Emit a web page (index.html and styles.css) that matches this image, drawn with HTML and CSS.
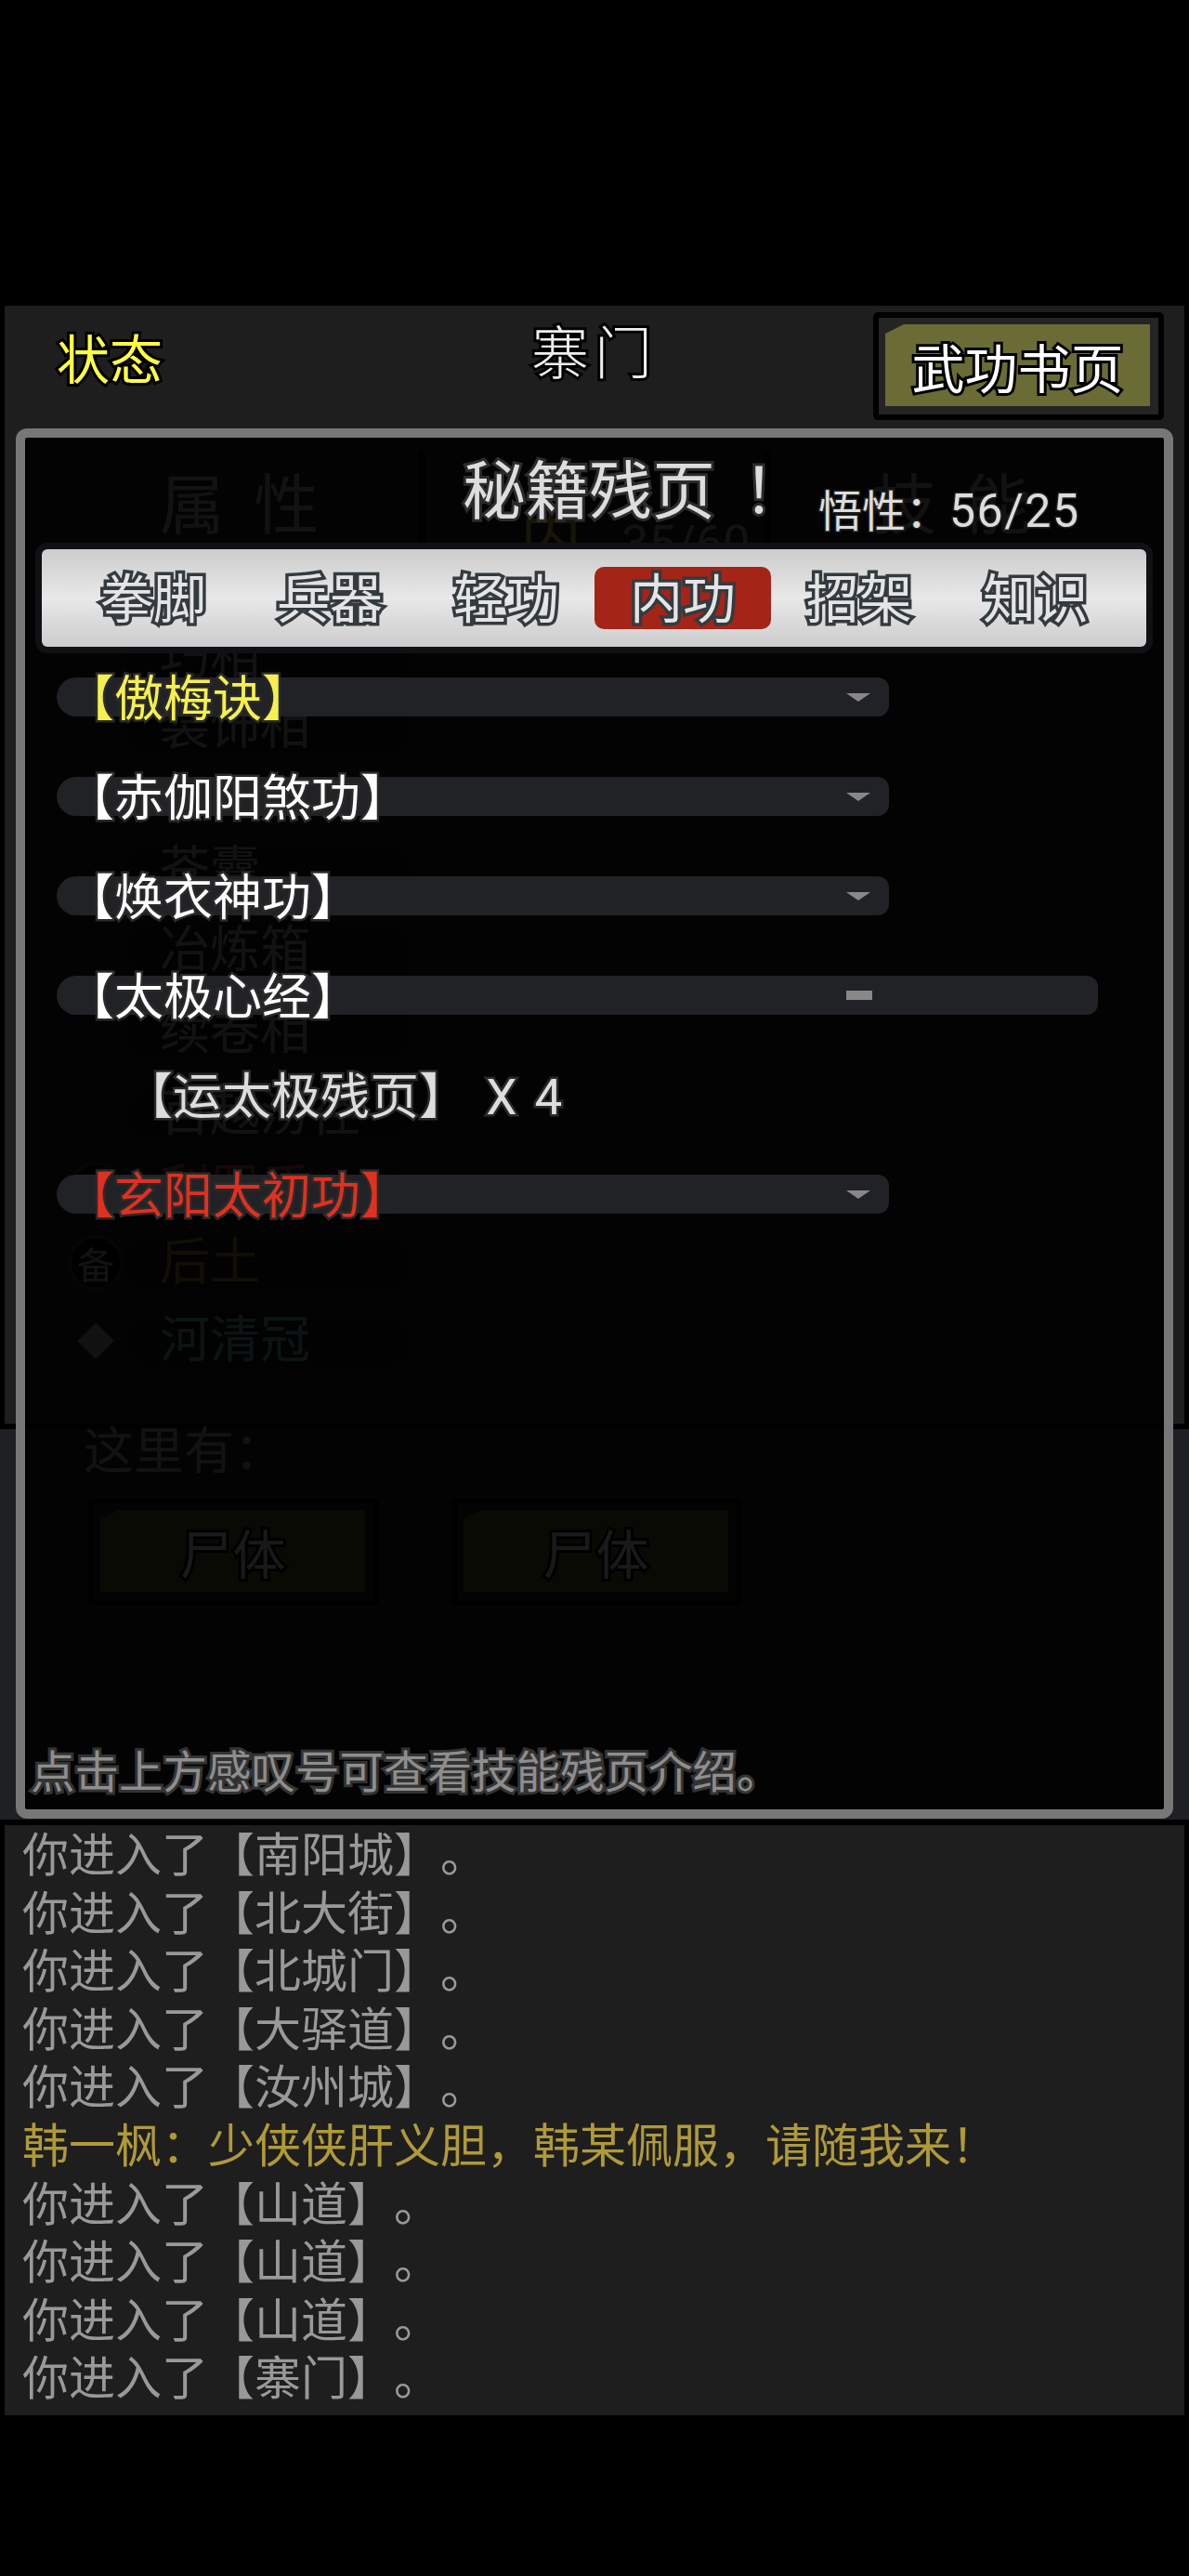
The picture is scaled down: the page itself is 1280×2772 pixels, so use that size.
FILE: index.html
```html
<!DOCTYPE html>
<html lang="zh-CN">
<head>
  <meta charset="UTF-8" />
  <title>秘籍残页</title>
  <link rel="stylesheet" href="styles.css">
</head>
<body>

<div class="scene">
  <div class="topbar">
    <div class="status">状态</div>
    <div class="place">寨门</div>
    <div class="btn top-btn"><span class="btn-face">武功书页</span></div>
  </div>

  <div class="page-tabs">
    <div class="page-tab">属 性</div>
    <div class="page-tab mid"><span class="mid-name">内</span><span class="mid-num">35/60</span></div>
    <div class="page-tab last">技 能</div>
  </div>

  <div class="gear-list">
    <div class="gear tight"><span class="gear-name">巧相</span></div>
    <div class="gear tight"><span class="gear-name">装饰相</span></div>
    <div class="gear tight"></div>
    <div class="gear"><span class="gear-name">苍囊</span></div>
    <div class="gear tall"><span class="gear-name">冶炼箱</span></div>
    <div class="gear tall"><span class="gear-name">续卷相</span></div>
    <div class="gear tall"><span class="gear-name">百越涝径</span></div>
    <div class="gear short"><span class="gear-icon round"></span><span class="gear-name red">利罗盾</span></div>
    <div class="gear"><span class="gear-icon round">备</span><span class="gear-name brown">后土</span></div>
    <div class="gear"><span class="gear-icon"><span class="diamond"></span></span><span class="gear-name teal">河清冠</span></div>
  </div>
</div>

<div class="room">
  <div class="room-title">这里有：</div>
  <div class="room-items">
    <div class="btn"><span class="btn-face">尸体</span></div>
    <div class="btn"><span class="btn-face">尸体</span></div>
  </div>
</div>

<div class="log">
  <div>你进入了【南阳城】。</div>
  <div>你进入了【北大街】。</div>
  <div>你进入了【北城门】。</div>
  <div>你进入了【大驿道】。</div>
  <div>你进入了【汝州城】。</div>
  <div class="talk">韩一枫：少侠侠肝义胆，韩某佩服，请随我来！</div>
  <div>你进入了【山道】。</div>
  <div>你进入了【山道】。</div>
  <div>你进入了【山道】。</div>
  <div>你进入了【寨门】。</div>
</div>

<!-- skill page popup, sits over everything above -->
<div class="modal">
  <div class="modal-head">
    <div class="modal-title">秘籍残页<span class="bang">！</span></div>
    <div class="modal-points">悟性：<span class="points-num">56/25</span></div>
  </div>

  <div class="kinds">
    <div class="kind">拳脚</div>
    <div class="kind">兵器</div>
    <div class="kind">轻功</div>
    <div class="kind active">内功</div>
    <div class="kind">招架</div>
    <div class="kind">知识</div>
  </div>

  <div class="skills">
    <div class="skill">
      <span class="skill-name yellow">【傲梅诀】</span>
      <span class="arrow"></span>
    </div>
    <div class="skill">
      <span class="skill-name">【赤伽阳煞功】</span>
      <span class="arrow"></span>
    </div>
    <div class="skill">
      <span class="skill-name">【焕衣神功】</span>
      <span class="arrow"></span>
    </div>
    <div class="skill wide">
      <span class="skill-name">【太极心经】</span>
      <span class="square"></span>
    </div>
    <div class="piece">【运太极残页】 X 4</div>
    <div class="skill">
      <span class="skill-name red-name">【玄阳太初功】</span>
      <span class="arrow"></span>
    </div>
  </div>

  <div class="hint">点击上方感叹号可查看技能残页介绍。</div>
</div>

</body>
</html>
```

FILE: styles.css
```css
body {
  margin: 0;
  height: 2772px;
  padding-top: 329px;
  box-sizing: border-box;
  background-color: #000;
  color: #bbb;
  font-family: Roboto, "Noto Sans CJK SC", sans-serif;
  text-spacing-trim: space-all;
  position: relative;
  overflow: hidden;
}

.scene {
  height: 1203px;
  margin: 0 5px;
  background-color: #1e1e1e;
}

.topbar {
  display: grid;
  grid-template-columns: 1fr auto 1fr;
  height: 132px;
  padding: 7px 22px 0 56px;
  box-sizing: border-box;
}

.status {
  font-size: 57px;
  line-height: 106px;
  color: #ffff44;
  -webkit-text-stroke: 6px #000;
  paint-order: stroke fill;
}

.place {
  margin-right: 34px;
  font-size: 62px;
  font-weight: 300;
  line-height: 92px;
  letter-spacing: 6px;
  color: #eee;
  -webkit-text-stroke: 6px #000;
  paint-order: stroke fill;
}

.top-btn {
  justify-self: end;
}

.btn {
  width: 313px;
  height: 116px;
  box-sizing: border-box;
  padding: 7px 9px 9px 7px;
  background-color: #242424;
  border: 6px solid #000;
  border-radius: 5px;
}

.btn-face {
  display: flex;
  align-items: center;
  justify-content: center;
  height: 100%;
  background-color: #6b6b35;
  clip-path: polygon(20px 0, 100% 0, 100% 100%, 0 100%, 0 10px);
  font-size: 57px;
  color: #fff;
  -webkit-text-stroke: 6px #000;
  paint-order: stroke fill;
}

.page-tabs {
  display: flex;
  height: 110px;
  margin: 24px 57px 0 60px;
  font-size: 70px;
  line-height: 120px;
  text-align: center;
  word-spacing: 14px;
}

.page-tab {
  width: 385px;
}

.page-tab.mid {
  width: 380px;
  height: 110px;
  padding-left: 102px;
  border-left: 8px solid #000;
  border-right: 8px solid #000;
  box-sizing: border-box;
  text-align: left;
  font-size: 66px;
  line-height: 190px;
}

.mid-name {
  color: #e8d040;
  margin-right: 43px;
}

.mid-num {
  font-size: 52px;
}

.page-tab.last {
  width: 388px;
}

.gear-list {
  margin-top: 76px;
}

.gear {
  display: flex;
  align-items: center;
  height: 84px;
  padding-left: 130px;
  position: relative;
  font-size: 54px;
}

.gear.tight {
  height: 74.7px;
}

.gear.tall {
  height: 88px;
}

.gear.short {
  height: 73.5px;
}

.gear-icon {
  position: absolute;
  left: 68px;
  width: 60px;
  height: 60px;
  display: flex;
  align-items: center;
  justify-content: center;
  font-size: 40px;
}

.gear-icon.round {
  background-color: #000;
  border: 4px solid #334;
  border-radius: 50%;
  box-sizing: border-box;
}

.diamond {
  width: 28px;
  height: 28px;
  background-color: #aaa;
  transform: rotate(45deg);
}

.gear-name {
  width: 271px;
  padding-left: 37px;
  background-color: #161616;
  border-radius: 30px;
  line-height: 60px;
}

.red {
  color: #e05050;
}

.brown {
  color: #c09030;
}

.teal {
  color: #70c8c8;
}

.room {
  height: 420px;
  margin-top: 6px;
  background-color: #1e2024;
}

.room-title {
  padding-left: 90px;
  font-size: 54px;
  line-height: 50px;
}

.room-items {
  display: flex;
  gap: 78px;
  margin: 24px 0 0 95px;
}

.log {
  height: 635px;
  box-sizing: border-box;
  margin: 6px 5px 0;
  padding: 2px 0 0 19px;
  background-color: #1e1e1e;
  color: #999;
  font-size: 50px;
  line-height: 62.6px;
}

.talk {
  color: #b09a38;
}

.modal {
  position: absolute;
  left: 17px;
  top: 461px;
  width: 1246px;
  height: 1496px;
  box-sizing: border-box;
  display: flex;
  flex-direction: column;
  background-color: rgba(0, 0, 0, 0.9);
  border: 10px solid #777;
  border-radius: 12px;
}

.modal-head {
  display: flex;
  align-items: flex-start;
  height: 120px;
  padding-left: 471px;
  box-sizing: border-box;
}

.modal-title {
  width: 380px;
  flex-shrink: 0;
  font-size: 68px;
  line-height: 106px;
  white-space: nowrap;
  color: #ddd;
  -webkit-text-stroke: 6px #2c2c2c;
  paint-order: stroke fill;
}

.bang {
  font-family: "Noto Sans CJK TC", sans-serif;
  margin-left: 30px;
}

.modal-points {
  margin: 44px 0 0 3px;
  font-size: 47px;
  line-height: 70px;
  white-space: nowrap;
  color: #ddd;
  -webkit-text-stroke: 3px #222;
  paint-order: stroke fill;
}

.points-num {
  font-size: 50px;
  letter-spacing: 1.5px;
}

.kinds {
  display: flex;
  align-items: center;
  height: 105px;
  margin: 0 19px 0 18px;
  padding-left: 25px;
  background: linear-gradient(#ccc, #e8e8e8 50%, #ccc);
  border-radius: 6px;
  box-shadow: 0 0 0 7px #101114;
}

.kind {
  width: 190px;
  height: 67px;
  text-align: center;
  font-size: 57px;
  line-height: 72px;
  color: #e4e4e4;
  -webkit-text-stroke: 7px #333b40;
  paint-order: stroke fill;
}

.kind.active {
  background-color: #a52418;
  border-radius: 10px;
}

.skills {
  margin-top: 33px;
  font-size: 53px;
}

.skill {
  display: flex;
  align-items: center;
  width: 896px;
  height: 42px;
  margin: 0 0 65px 34px;
  padding-left: 9px;
  box-sizing: border-box;
  background-color: #212226;
  border-radius: 21px 12px 12px 21px;
}

.skill.wide {
  width: 1121px;
}

.skill-name {
  width: 841px;
  flex-shrink: 0;
  margin-bottom: 5px;
  color: #fff;
  white-space: nowrap;
  -webkit-text-stroke: 5px #2a2a2a;
  paint-order: stroke fill;
}

.yellow {
  color: #f5f050;
}

.red-name {
  color: #e03020;
}

.arrow {
  width: 0;
  height: 0;
  border-left: 13px solid transparent;
  border-right: 13px solid transparent;
  border-top: 9px solid #888;
}

.square {
  width: 28px;
  height: 10px;
  background-color: #888;
}

.piece {
  height: 42px;
  line-height: 48px;
  margin: 0 0 65px 106px;
  color: #ddd;
  white-space: pre;
  word-spacing: 6px;
  -webkit-text-stroke: 5px #2a2a2a;
  paint-order: stroke fill;
}

.hint {
  margin-top: auto;
  margin-bottom: 15px;
  padding-left: 6px;
  font-size: 47.5px;
  line-height: 48px;
  color: #8e8e8e;
  -webkit-text-stroke: 6px #333;
  paint-order: stroke fill;
}
```
